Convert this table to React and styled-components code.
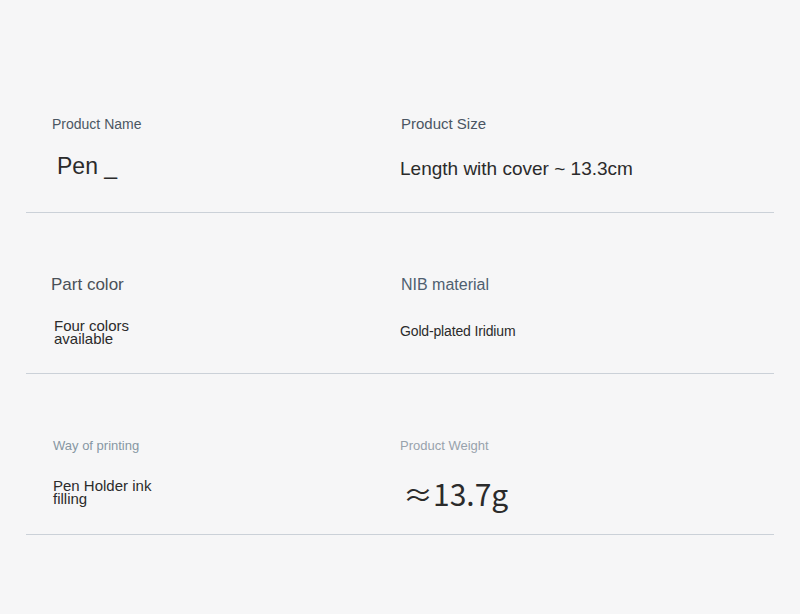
import React from 'react';
import styled, { createGlobalStyle } from 'styled-components';

const GlobalStyle = createGlobalStyle`
html, body {
  margin: 0;
  padding: 0;
  background: #f6f6f7;
}
body {
  font-family: "Liberation Sans", Arial, sans-serif;
}
`

const Page = styled.div`
width: 800px;
height: 614px;
box-sizing: border-box;
padding: 52px 26px 0 26px;
background: #f6f6f7;
`

const Row = styled.div`
display: grid;
grid-template-columns: 374px 1fr;
height: 161px;
box-sizing: border-box;
border-bottom: 1px solid #cbd1d8;
`

const Cell = styled.div`
display: flex;
flex-direction: column;
padding-top: 62px;
padding-left: ${(p) => p.$indent || 0}px;
`

const Label = styled.div`
height: 20px;
line-height: 20px;
font-size: ${(p) => p.$size}px;
color: ${(p) => p.$color};
margin-left: ${(p) => p.$shift || 0}px;
white-space: nowrap;
`

const Value = styled.div`
height: 48px;
margin-top: ${(p) => 12 + (p.$dy || 0)}px;
display: flex;
align-items: center;
margin-left: ${(p) => p.$shift || 0}px;
font-size: ${(p) => p.$size}px;
line-height: ${(p) => p.$lh || 1.2};
letter-spacing: ${(p) => p.$ls || 0}px;
color: #2b2b2b;
font-family: ${(p) => (p.$cjk ? '"Noto Sans CJK SC", "Noto Sans", sans-serif' : '"Liberation Sans", Arial, sans-serif')};
`

const rows = [
  [
    { label: 'Product Name', ls: 14, lc: '#4b5663', lx: 0, value: 'Pen _', vs: 23, vx: 5, dy: -3 },
    { label: 'Product Size', ls: 15, lc: '#4a5563', lx: 1, value: 'Length with cover ~ 13.3cm', vs: 19, vx: 0, dy: -1 },
  ],
  [
    { label: 'Part color', ls: 17, lc: '#4a5058', lx: -1, value: <>Four colors<br />available</>, vs: 15, vx: 2, lh: '13px', dy: 1 },
    { label: 'NIB material', ls: 16, lc: '#4f5f70', lx: 1, value: 'Gold-plated Iridium', vs: 14, vx: 0, vls: -0.15 },
  ],
  [
    { label: 'Way of printing', ls: 13, lc: '#8796a3', lx: 1, value: <>Pen Holder ink<br />filling</>, vs: 15, vx: 1, lh: '13px' },
    { label: 'Product Weight', ls: 13, lc: '#98a2ac', lx: 0, value: '≈13.7g', vs: 30, vx: 3, cjk: true, dy: 1 },
  ],
]

const App = () => {
  return (
    <>
      <GlobalStyle />
      <Page>
        {rows.map((row, i) => (
          <Row key={i}>
            {row.map((c, j) => (
              <Cell key={j} $indent={j === 0 ? 26 : 0}>
                <Label $size={c.ls} $color={c.lc} $shift={c.lx}>{c.label}</Label>
                <Value $size={c.vs} $shift={c.vx} $lh={c.lh} $ls={c.vls} $cjk={c.cjk} $dy={c.dy}>
                  <span>{c.value}</span>
                </Value>
              </Cell>
            ))}
          </Row>
        ))}
      </Page>
    </>
  )
}

export default App
